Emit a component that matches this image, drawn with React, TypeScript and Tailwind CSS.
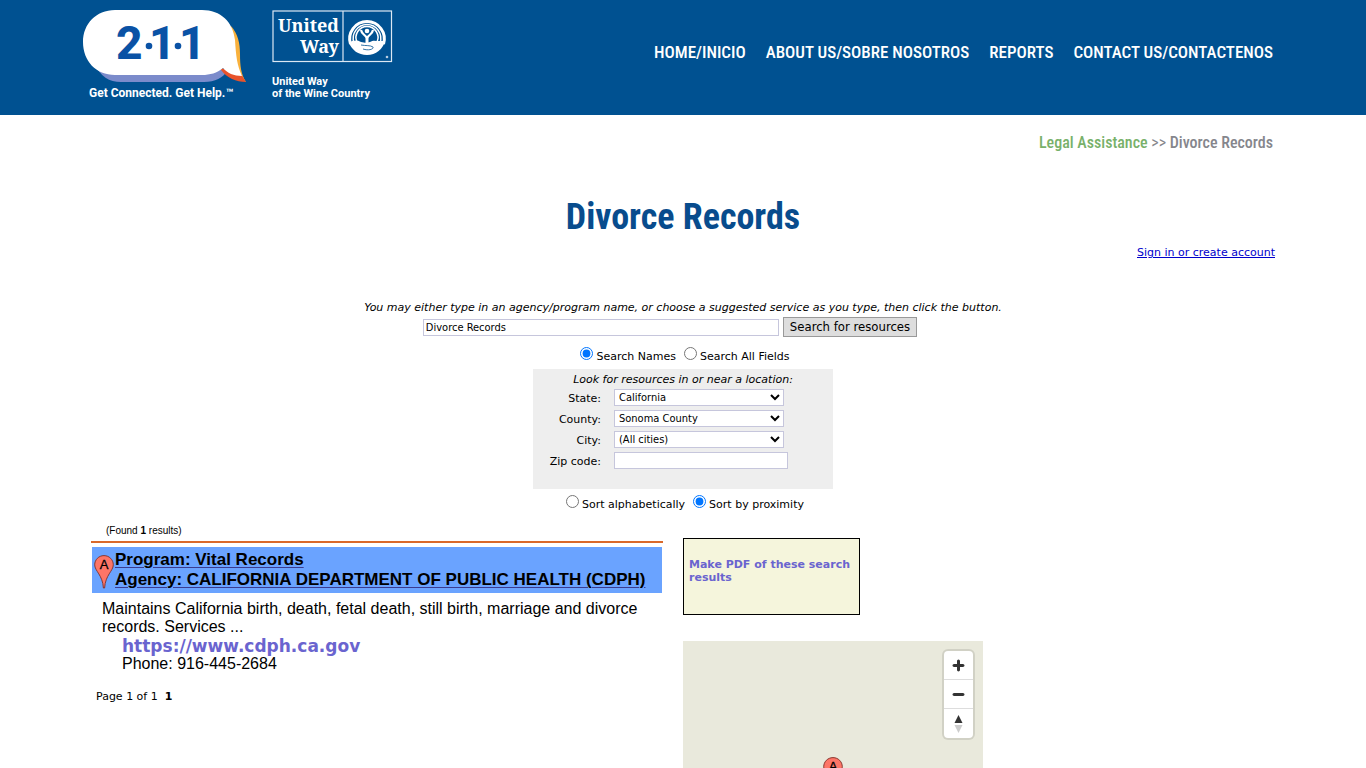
import React, { FC, useState } from "react";

const narrow = "font-['Roboto_Condensed','Liberation_Sans_Narrow','Liberation_Sans',sans-serif]";
const verdana = "font-['DejaVu_Sans',sans-serif]";
const tahoma = "font-['DejaVu_Sans_Condensed','DejaVu_Sans',sans-serif]";

const navItems = ["HOME/INICIO", "ABOUT US/SOBRE NOSOTROS", "REPORTS", "CONTACT US/CONTACTENOS"];

const locationFields = [
  { id: "state", label: "State:", options: ["California"] },
  { id: "county", label: "County:", options: ["Sonoma County"] },
  { id: "city", label: "City:", options: ["(All cities)"] },
];

const Logo211: FC = () => (
  <svg width="165" height="105" viewBox="13 0 165 105" role="img" aria-label="2-1-1">
    <path d="M23 62C31 77 39 82 51 82H134C145 82 153 78 158 70Z" fill="#7b8bcb" />
    <path d="M161 26C168 34 170 43 170 54C170 66 171 74 176 82L163 73Z" fill="#f9b13c" />
    <path d="M151 68L171 74L176 82C166 82 157 78 151 70Z" fill="#e8532b" />
    <path
      d="M45 10H132C151 10 163 22 165 40C166 56 167 65 172 76C164 76 157 73 153 68C147 73 140 75 132 75H45C26 75 13 61 13 42C13 24 26 10 45 10Z"
      fill="#fff"
    />
    <g fill="#0a52a5" fontFamily="Roboto" fontWeight="800" fontSize="46">
      <text x="46" y="59">2</text>
      <text x="79" y="59">1</text>
      <text x="109" y="59">1</text>
      <circle cx="79" cy="46" r="3.300" />
      <circle cx="108" cy="46" r="3.300" />
    </g>
    <text x="19" y="97" fill="#fff" fontFamily="Roboto" fontWeight="700" fontSize="12">
      Get Connected. Get Help.
    </text>
    <text x="156" y="97" fill="#fff" fontFamily="Roboto" fontWeight="700" fontSize="12">
      ™
    </text>
  </svg>
);

const UnitedWayLogo: FC = () => (
  <svg width="122" height="105" viewBox="10 0 122 105" role="img" aria-label="United Way">
    <g fill="none" stroke="#dce8f4" strokeWidth="1.200">
      <rect x="11" y="11" width="118.500" height="50.500" />
      <path d="M81 11V61.500" />
    </g>
    <g fill="#fff" fontFamily="Noto Serif, DejaVu Serif Condensed, DejaVu Serif" fontWeight="700" fontSize="18">
      <text x="77" y="32" textAnchor="end">United</text>
      <text x="77" y="53" textAnchor="end">Way</text>
    </g>
    <g fill="none" stroke="#fff">
      <path d="M88.500 44A17.300 17.300 0 1 1 121.500 44" strokeWidth="3" />
      <path d="M92 43A13.800 13.800 0 1 1 118 43" strokeWidth="1.500" />
      <path d="M95 42A11 11 0 1 1 115 42" strokeWidth="1.500" />
      <path d="M99 30C99.500 34 103.500 35 105 38C106.500 35 110.500 34 111 30" strokeWidth="2.200" />
      <path d="M105 36V43" strokeWidth="3" />
    </g>
    <circle cx="105" cy="31" r="2.300" fill="#fff" />
    <path d="M87 43C91 40 95 40 99 42C103 43 105 43 108 42C111 40 114 41 116 41L123 41C121 49 114 55 105 55C96 55 90 50 87 43Z" fill="#fff" />
    <path d="M99 45C104 46 108 45 111 47C112 49 107 51 101 49" fill="none" stroke="#005191" strokeWidth="0.800" />
    <circle cx="125" cy="57" r="1.300" fill="#b7cee3" />
    <g fill="#fff" fontFamily="Roboto" fontWeight="700" fontSize="11">
      <text x="10" y="85">United Way</text>
      <text x="10" y="97">of the Wine Country</text>
    </g>
  </svg>
);

const Marker: FC = () => (
  <svg width="20" height="34" viewBox="0 0 20 34" aria-hidden="true">
    <path
      d="M10 .6C4.800.6.700 4.700.700 9.800C.700 16 8.700 20 9.400 33H10.600C11.300 20 19.300 16 19.300 9.800C19.300 4.700 15.200.6 10 .6Z"
      fill="#fd7567"
      stroke="#7d2f28"
      strokeWidth="0.900"
    />
    <text x="10" y="14" textAnchor="middle" fontFamily="Liberation Sans" fontSize="13" fontWeight="400" stroke="#000" strokeWidth="0.300">
      A
    </text>
  </svg>
);

interface RadioProps {
  name: string;
  label: string;
  checked: boolean;
  onChange: () => void;
}

const Radio: FC<RadioProps> = ({ name, label, checked, onChange }) => (
  <label className="flex gap-[3px]">
    <input type="radio" name={name} checked={checked} onChange={onChange} className="h-[13px] w-[13px]" />
    <span className="pt-[3px]">{label}</span>
  </label>
);

const SearchForm: FC = () => {
  const [query, setQuery] = useState("Divorce Records");
  const [scope, setScope] = useState("names");
  const [sort, setSort] = useState("proximity");

  return (
    <form className="flex flex-col items-center text-[11px] leading-[14px]" onSubmit={(e) => e.preventDefault()}>
      <label htmlFor="query" className="italic">
        You may either type in an agency/program name, or choose a suggested service as you type, then click the button.
      </label>
      <div className="mt-[2px] flex items-center gap-1 pr-[26px]">
        <input
          id="query"
          value={query}
          onChange={(e) => setQuery(e.target.value)}
          className={`${tahoma} h-[17px] w-[356px] border border-[#c6c6dc] px-[2px] text-[11px]`}
        />
        <button className={`${tahoma} h-5 border border-[#999] bg-[#ddd] px-[6px] text-[13px] leading-4`}>
          Search for resources
        </button>
      </div>
      <div className="mt-[10px] flex gap-2 pl-1">
        <Radio name="scope" label="Search Names" checked={scope === "names"} onChange={() => setScope("names")} />
        <Radio name="scope" label="Search All Fields" checked={scope === "all"} onChange={() => setScope("all")} />
      </div>
      <fieldset className="mt-[5px] h-[120px] w-[300px] bg-[#eee] pt-1">
        <legend className="float-left w-full text-center italic">Look for resources in or near a location:</legend>
        <div className="clear-both grid grid-cols-[68px_174px] items-start gap-x-[13px] gap-y-[3px] pt-[2px]">
          {locationFields.map((field) => (
            <React.Fragment key={field.id}>
              <label htmlFor={field.id} className="pt-px text-right leading-[17px]">
                {field.label}
              </label>
              <select
                id={field.id}
                className={`${tahoma} h-[17px] w-[170px] border border-[#c6c6dc] bg-white text-[11px]`}
              >
                {field.options.map((option) => (
                  <option key={option}>{option}</option>
                ))}
              </select>
            </React.Fragment>
          ))}
          <label htmlFor="zip" className="pt-px text-right leading-[17px]">
            Zip code:
          </label>
          <input id="zip" className="h-[17px] border border-[#c6c6dc] bg-white px-[2px]" />
        </div>
      </fieldset>
      <div className="mt-[6px] flex gap-2 pl-1">
        <Radio name="sort" label="Sort alphabetically" checked={sort === "alpha"} onChange={() => setSort("alpha")} />
        <Radio name="sort" label="Sort by proximity" checked={sort === "proximity"} onChange={() => setSort("proximity")} />
      </div>
    </form>
  );
};

const Results: FC = () => (
  <section className="w-[572px] text-[16px] leading-[18px] font-['Liberation_Sans',sans-serif]">
    <p className="pl-[15px] text-[10px] leading-[12px]">
      (Found <b>1</b> results)
    </p>
    <hr className="mt-[4px] h-[2px] border-0 bg-[#d9692b]" />
    <a
      href="#result"
      className="mt-1 mr-px ml-px flex h-[46px] items-center gap-px bg-[#6aa3ff] pl-[2px] text-[17px] leading-5 font-bold underline decoration-[#3b3b8f] decoration-1 underline-offset-2"
    >
      <span className="pt-1">
        <Marker />
      </span>
      <span>
        Program: Vital Records
        <br />
        Agency: CALIFORNIA DEPARTMENT OF PUBLIC HEALTH (CDPH)
      </span>
    </a>
    <p className="mt-[7px] pr-4 pl-[11px]">
      Maintains California birth, death, fetal death, still birth, marriage and divorce records. Services ...
    </p>
    <p className="mt-[2px] pl-[31px] leading-[17px]">
      <a href="#site" className={`${verdana} text-[17px] font-bold text-[#6a64cf]`}>
        https://www.cdph.ca.gov
      </a>
      <br />
      Phone: 916-445-2684
    </p>
    <p className={`${verdana} mt-[18px] pl-[5px] text-[11px] leading-[14px]`}>
      Page 1 of 1 &nbsp;<b>1</b>
    </p>
  </section>
);

const MapPanel: FC = () => (
  <div className="relative mt-[26px] h-[300px] w-[300px] bg-[#e9e9dc]">
    <div className="absolute top-[10px] right-[10px] flex w-[29px] flex-col divide-y divide-[#ddd] overflow-hidden rounded bg-white shadow-[0_0_0_2px_rgba(0,0,0,0.1)]">
      <button aria-label="Zoom in" className="h-[29px]">
        <svg width="29" height="29" viewBox="0 0 29 29" fill="#333">
          <path d="M14.500 8.500c-.75 0-1.500.75-1.500 1.500v3h-3c-.75 0-1.500.75-1.500 1.500S9.250 16 10 16h3v3c0 .75.75 1.500 1.500 1.500S16 19.750 16 19v-3h3c.75 0 1.500-.75 1.500-1.500S19.750 13 19 13h-3v-3c0-.75-.75-1.500-1.500-1.500z" />
        </svg>
      </button>
      <button aria-label="Zoom out" className="h-[29px]">
        <svg width="29" height="29" viewBox="0 0 29 29" fill="#333">
          <path d="M10 13c-.75 0-1.500.75-1.500 1.500S9.250 16 10 16h9c.75 0 1.500-.75 1.500-1.500S19.750 13 19 13h-9z" />
        </svg>
      </button>
      <button aria-label="Reset north" className="h-[29px]">
        <svg width="29" height="29" viewBox="0 0 29 29">
          <path d="M10.500 14l4-8 4 8h-8z" fill="#333" />
          <path d="M10.500 16l4 8 4-8h-8z" fill="#ccc" />
        </svg>
      </button>
    </div>
    <div className="absolute top-[116px] left-[140px]">
      <Marker />
    </div>
  </div>
);

export default function App() {
  return (
    <div className={`${verdana} min-h-screen bg-white text-black`}>
      <header className="bg-[#005191]">
        <div className="mx-auto flex h-[115px] max-w-[1200px] items-start justify-between pr-[10px]">
          <a href="#home" className="flex gap-6">
            <Logo211 />
            <UnitedWayLogo />
          </a>
          <nav className={`${narrow} flex gap-5 pt-10 text-[17px] leading-6 font-medium text-white`}>
            {navItems.map((item) => (
              <a href="#nav" key={item}>
                {item}
              </a>
            ))}
          </nav>
        </div>
      </header>
      <main className="mx-auto max-w-[1200px] px-2">
        <p className={`${narrow} pt-4 pr-[2px] text-right text-[16px] leading-6 font-medium text-[#85868c]`}>
          <a href="#legal" className="text-[#78b16a]">
            Legal Assistance
          </a>{" "}
          <span className="font-normal">&gt;&gt;</span> Divorce Records
        </p>
        <h1 className={`${narrow} mt-10 text-center text-[36px] leading-[44px] font-bold text-[#084c8d]`}>
          Divorce Records
        </h1>
        <p className="mt-[7px] text-right text-[11px] leading-[14px]">
          <a href="#signin" className="text-[#00c] underline">
            Sign in or create account
          </a>
        </p>
        <div className="mt-[41px]">
          <SearchForm />
        </div>
        <div className="mt-[13px] flex gap-5">
          <Results />
          <aside className="pt-[13px]">
            <div className="h-[77px] w-[177px] border border-black bg-[#f5f5dc] px-[5px] pt-[19px] text-[11px] leading-[13px] font-bold text-[#6a64cf]">
              <a href="#pdf">Make PDF of these search results</a>
            </div>
            <MapPanel />
          </aside>
        </div>
      </main>
    </div>
  );
}
